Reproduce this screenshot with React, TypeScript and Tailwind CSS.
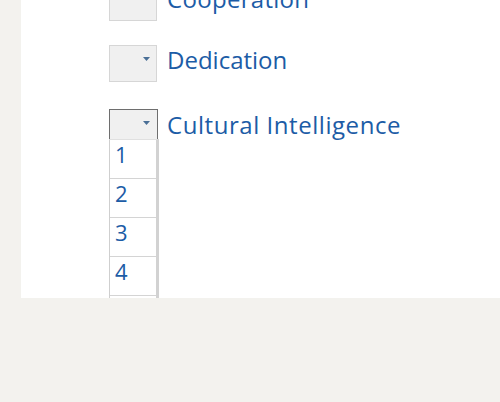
import React from "react";

const Arrow = () => (
  <svg width="7" height="4" viewBox="0 0 7 4" className="block">
    <path d="M0 0 L7 0 L3.5 4 Z" fill="#4a6f96" />
  </svg>
);

export default function App() {
  const font = { fontFamily: '"Open Sans", "Noto Sans", sans-serif' };
  return (
    <div className="w-[500px] h-[402px] bg-[#f3f2ee] overflow-hidden" style={font}>
      <div className="ml-[21px] h-[298px] bg-white overflow-hidden">
        <div className="flex flex-col pl-[88px] -mt-[16px]">
          {/* Cooperation */}
          <div className="flex items-start h-[37px]">
            <div className="w-[48px] h-[37px] bg-[#f0f0f0] border border-[#d6d6d6]" />
            <div className="ml-[10px] -mt-[1px] text-[24px] leading-[32px] text-[#1c5ca6] tracking-[0.3px]">Cooperation</div>
          </div>
          {/* Dedication */}
          <div className="flex items-start h-[37px] mt-[24px]">
            <div className="w-[48px] h-[37px] bg-[#f0f0f0] border border-[#d6d6d6] flex items-start justify-end pt-[11px] pr-[6px]">
              <Arrow />
            </div>
            <div className="ml-[10px] -mt-[1px] text-[24px] leading-[32px] text-[#1c5ca6]">Dedication</div>
          </div>
          {/* Cultural Intelligence */}
          <div className="flex items-start mt-[27px]">
            <div className="flex flex-col w-[50px]">
              <div className="w-[49px] h-[30px] bg-[#f0f0f0] border border-b-0 border-[#6e6e6e] flex items-start justify-end pt-[11px] pr-[7px]">
                <Arrow />
              </div>
              <div className="flex flex-col w-[50px] bg-white border-l border-[#cfcfcf] border-r-[3px] border-r-[#d2d2d2] border-t border-t-[#e0e0e0]">
                {["1", "2", "3", "4", ""].map((n, i) => (
                  <div
                    key={i}
                    className="h-[39px] border-b border-[#d4d4d4] pl-[5px] text-[22px] leading-[28px] text-[#1c5ca6]"
                  >
                    {n}
                  </div>
                ))}
              </div>
            </div>
            <div className="ml-[8px] text-[24px] leading-[32px] text-[#1c5ca6] tracking-[0.55px]">Cultural Intelligence</div>
          </div>
        </div>
      </div>
    </div>
  );
}
